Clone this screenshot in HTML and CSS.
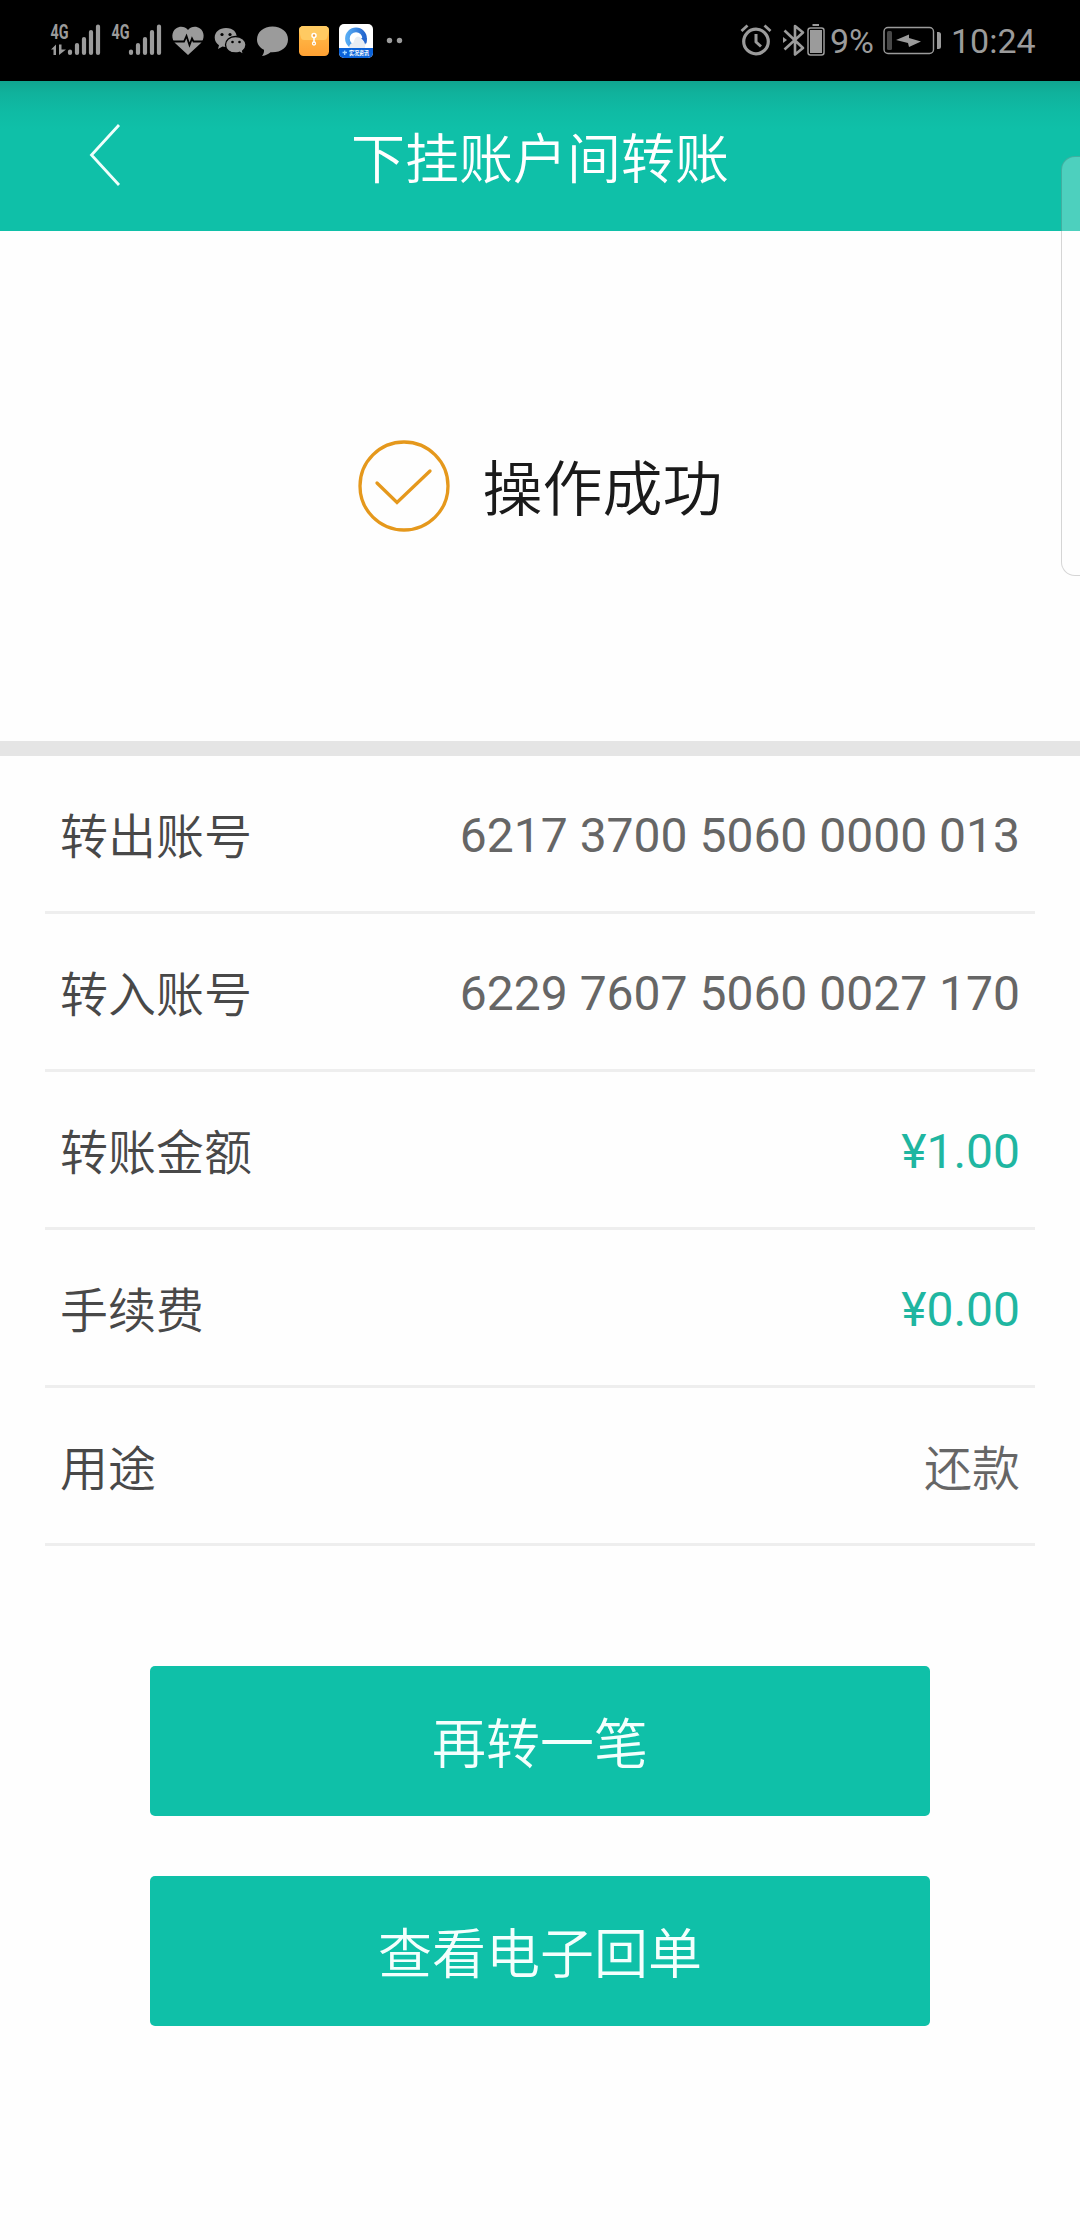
FILE: index.html
```html
<!DOCTYPE html>
<html lang="zh-CN">
<head>
<meta charset="utf-8">
<title>下挂账户间转账</title>
<link rel="stylesheet" href="styles.css">
</head>
<body>
<div class="screen">
  <div class="status">
    <div class="status-group">
      <svg width="60" height="81" viewBox="48 0 60 81">
        <text class="net" x="50.500" y="38.500" textLength="18" lengthAdjust="spacingAndGlyphs">4G</text>
        <path class="fill" d="M51 49.500L56 44.500V55H53.500V49.500ZM59 44.500H61.500V49.500H66L59 55Z"/>
        <path class="bars" d="M70 51.500V53M77 45V53M84 39V53M91 32V53M98 26.500V53"/>
      </svg>
      <svg width="60" height="81" viewBox="108 0 60 81">
        <text class="net" x="111.500" y="38.500" textLength="18" lengthAdjust="spacingAndGlyphs">4G</text>
        <path class="bars" d="M131 51.500V53M138 45V53M145 39V53M152 32V53M159 26.500V53"/>
      </svg>
      <svg width="42" height="81" viewBox="168 0 42 81">
        <path class="fill" d="M188 55L175.500 43.500C171 39 171.500 31.500 176 28.500C180 25.800 185 26.500 188 30C191 26.500 196 25.800 200 28.500C204.500 31.500 205 39 200.500 43.500Z"/>
        <path class="cut" d="M172 41.500H184L186.500 36L189.500 45L192 38.500L193.500 41.500H204"/>
      </svg>
      <svg width="42" height="81" viewBox="210 0 42 81">
        <path class="fill" d="M226 28C219.500 28 214.700 32 214.700 37.500C214.700 41 216.500 43.500 219 45.200L218 49L222.500 46.600C224 47 226 47 227.500 46.800C239 46 241 28 226 28Z"/>
        <path class="fill wechat-front" d="M235.500 36.500C229.500 36.500 225.500 40.300 225.500 44.800C225.500 49.500 229.500 53 235.500 53C237 53 238.500 52.700 239.500 52.300L243.500 54.500L242.600 51C244.700 49.500 246 47.300 246 44.800C246 40.300 241.500 36.500 235.500 36.500Z"/>
        <circle cx="222" cy="34.500" r="1.600"/><circle cx="230" cy="34.500" r="1.600"/>
        <circle cx="232.500" cy="42" r="1.300"/><circle cx="239.500" cy="42" r="1.300"/>
      </svg>
      <svg width="42" height="81" viewBox="252 0 42 81">
        <path class="fill" d="M272.500 26.500C263.500 26.500 257 32 257 39.500C257 44 259.700 47.600 264 49.800C264.300 52 263.500 54 262 56C266 55.500 268.500 54 270.500 52.300C280.500 53 288 47.500 288 39.500C288 32 281.500 26.500 272.500 26.500Z"/>
      </svg>
      <svg width="40" height="81" viewBox="294 0 40 81">
        <defs><linearGradient id="folder" x2="0" y2="1"><stop stop-color="#ffc04e"/><stop offset="1" stop-color="#ffa133"/></linearGradient></defs>
        <rect x="299" y="26" width="30" height="30" rx="4.500" fill="url(#folder)"/>
        <path d="M299 30.500Q299 26 303.500 26H324.500Q329 26 329 30.500L327 38Q326.500 40 324 40H304Q301.500 40 301 38Z" fill="#ffca62"/>
        <path d="M314 36V43" stroke="#fff" stroke-width="1.500"/>
        <circle cx="314" cy="35.500" r="2" fill="#f0a040" stroke="#fff" stroke-width="1.500"/>
        <circle cx="314" cy="43.500" r="1.500" fill="#f0a040" stroke="#fff" stroke-width="1.300"/>
      </svg>
      <svg width="44" height="81" viewBox="334 0 44 81">
        <defs>
          <linearGradient id="ring"><stop stop-color="#55aaf3"/><stop offset="1" stop-color="#2466ce"/></linearGradient>
          <clipPath id="tile"><rect x="339" y="24" width="34" height="34" rx="5"/></clipPath>
        </defs>
        <g clip-path="url(#tile)">
          <rect x="339" y="24" width="34" height="34" fill="#fff"/>
          <circle cx="356" cy="38.500" r="8.600" fill="none" stroke="url(#ring)" stroke-width="4.600"/>
          <path d="M349 48Q349 43.500 353.500 42.500Q355.500 34.500 360 37Q363.500 39 365 44V48Z" fill="#e8edf3"/>
          <path d="M361 38L366.800 38L366.500 43.500Z" fill="#2466ce"/>
          <rect x="339" y="48" width="34" height="10" fill="#0c63d8"/>
          <path d="M342.500 52.500H347M344.700 50.500V55" stroke="#9fd5ff" stroke-width="1.300"/>
          <text class="tile-text" x="349" y="55" textLength="20" lengthAdjust="spacingAndGlyphs">实况资讯</text>
        </g>
      </svg>
      <svg width="28" height="81" viewBox="378 0 28 81">
        <circle class="fill" cx="389.500" cy="40.500" r="2.700"/><circle class="fill" cx="399.500" cy="40.500" r="2.700"/>
      </svg>
    </div>
    <div class="status-group">
      <svg width="40" height="81" viewBox="738 0 40 81">
        <circle class="line" cx="756" cy="41.500" r="12.300" stroke-width="3.200"/>
        <path class="line" d="M756 34V42L761 46.500" stroke-width="3"/>
        <path class="line" d="M741.500 31L747.500 25.500M764.500 25.500L770.500 31" stroke-width="2.800"/>
      </svg>
      <svg width="28" height="81" viewBox="778 0 28 81">
        <path class="line" d="M784.500 30.500L803 48L795 54.500V26L803 32.500L784.500 49.500" stroke-width="2.600"/>
        <path class="fill" d="M783 37L787 40L783 43Z"/>
      </svg>
      <svg width="24" height="81" viewBox="806 0 24 81">
        <rect class="line" x="808" y="28" width="16" height="27" rx="2.500" stroke-width="1.500"/>
        <path class="fill" d="M812.500 24H819V26H812.500ZM810 30H822V53H810Z"/>
      </svg>
      <span class="percent">9%</span>
      <svg width="68" height="81" viewBox="876 0 68 81">
        <rect class="line" x="884" y="27.500" width="49.500" height="26" rx="4" stroke-width="1.400"/>
        <rect x="887" y="31" width="5" height="19" rx="1.500" fill="#484848"/>
        <path class="fill" d="M896 40L909 34.500V38L921 41.500L909 47L908 43ZM937 32H938.500Q941 32 941 34.500V46.500Q941 49 938.500 49H937Z"/>
      </svg>
      <span class="clock">10:24</span>
    </div>
  </div>

  <header class="header">
    <svg class="back" width="32" height="62" viewBox="0 0 32 62"><path d="M30 1L2.500 31L30 61"/></svg>
    <h1 class="title">下挂账户间转账</h1>
  </header>
  <aside class="edge-panel"></aside>

  <section class="result">
    <svg width="92" height="92" viewBox="0 0 92 92"><circle cx="46" cy="46" r="44"/><path d="M19 43L39 62.500L72 31"/></svg>
    <span>操作成功</span>
  </section>

  <dl class="details">
    <div class="row"><dt>转出账号</dt><dd>6217 3700 5060 0000 013</dd></div>
    <div class="row"><dt>转入账号</dt><dd>6229 7607 5060 0027 170</dd></div>
    <div class="row"><dt>转账金额</dt><dd class="amount">¥1.00</dd></div>
    <div class="row"><dt>手续费</dt><dd class="amount">¥0.00</dd></div>
    <div class="row"><dt>用途</dt><dd class="purpose">还款</dd></div>
  </dl>

  <div class="actions">
    <button class="button">再转一笔</button>
    <button class="button">查看电子回单</button>
  </div>
</div>
</body>
</html>
```
FILE: styles.css
```css
* { box-sizing: border-box; margin: 0; padding: 0; }

body {
  background: #fefefe;
  font-family: Roboto, "Noto Sans CJK SC", sans-serif;
}

.screen {
  position: relative;
  width: 1080px;
  height: 2240px;
  overflow: hidden;
}

svg { display: block; flex: none; }

.status {
  display: flex;
  justify-content: space-between;
  height: 81px;
  padding: 0 42px 0 48px;
  background: #000;
  color: #9b9b9b;
  font-size: 34px;
}
.status-group { display: flex; }
.percent, .clock { line-height: 82px; white-space: nowrap; }
.percent { width: 46px; }
.clock { width: 94px; padding-left: 7px; }
.fill { fill: #9b9b9b; }
.line { fill: none; stroke: #9b9b9b; stroke-linejoin: round; }
.bars { stroke: #9b9b9b; stroke-width: 4.2; stroke-linecap: round; }
.cut { fill: none; stroke: #000; stroke-width: 1.8; }
.net { fill: #9b9b9b; font-size: 20px; font-weight: 700; }
.wechat-front { stroke: #000; stroke-width: 1.3; }
.tile-text { fill: #fff; font-size: 6px; font-weight: 700; }

.header {
  display: grid;
  grid-template-columns: 140px 1fr 140px;
  align-items: center;
  height: 150px;
  background: linear-gradient(#10a590, #10b29c 12px, #0fbba4 30px, #0fc0a8 48px);
  color: #fff;
}
.back {
  margin: 0 0 3px 89px;
  fill: none;
  stroke: #f0fffc;
  stroke-width: 2.8;
}
.title {
  grid-column: 2;
  padding-top: 10px;
  font-size: 54px;
  font-weight: 350;
  line-height: 80px;
  text-align: center;
}

.edge-panel {
  position: absolute;
  top: 156px;
  left: 1061px;
  width: 40px;
  height: 420px;
  border: 1.500px solid rgba(0, 0, 0, 0.16);
  border-radius: 14px;
  background: rgba(255, 255, 255, 0.26);
}

.result {
  display: flex;
  justify-content: center;
  align-items: center;
  gap: 33px;
  height: 525px;
  padding-bottom: 1px;
  border-bottom: 15px solid #e5e5e5;
  color: #1a1a1a;
  font-size: 60px;
  font-weight: 350;
}
.result span { line-height: 90px; padding-top: 10px; }
.result svg {
  fill: none;
  stroke: #e5981c;
  stroke-width: 3.3;
  stroke-linecap: round;
}

.details { padding: 0 45px; font-size: 48px; }
.row {
  display: flex;
  justify-content: space-between;
  align-items: center;
  height: 158px;
  padding: 0 15px;
  border-bottom: 3px solid #eee;
}
dt { padding-bottom: 2px; color: #484848; font-weight: 350; }
dd { padding-top: 3px; color: #666; font-weight: 400; }
.purpose { padding: 0 0 2px; font-weight: 350; }
.amount { color: #1fb6a1; }

.actions {
  display: flex;
  flex-direction: column;
  gap: 60px;
  padding: 120px 150px 0;
}
.button {
  height: 150px;
  padding-bottom: 2px;
  border: 0;
  border-radius: 5px;
  background: #0fc0a8;
  color: #f4fffd;
  font: 350 54px Roboto, "Noto Sans CJK SC", sans-serif;
}
```
